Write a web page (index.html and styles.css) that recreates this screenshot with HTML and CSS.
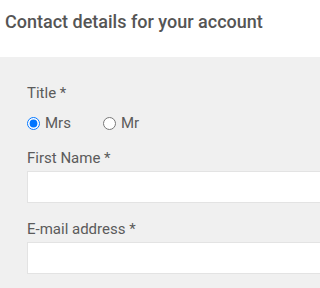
FILE: index.html
```html
<!DOCTYPE html>
<html lang="en">
<head>
<meta charset="utf-8">
<title>Contact details</title>
<link rel="stylesheet" href="styles.css">
</head>
<body>
  <header class="header">
    <h1 class="heading">Contact details for your account</h1>
  </header>
  <section class="panel">
    <div class="field">
      <div class="label">Title *</div>
      <div class="radios">
        <label class="radio"><input type="radio" name="title" checked><span>Mrs</span></label>
        <label class="radio"><input type="radio" name="title"><span>Mr</span></label>
      </div>
    </div>
    <div class="field">
      <label class="label" for="fn">First Name *</label>
      <input class="text-input" id="fn" type="text">
    </div>
    <div class="field">
      <label class="label" for="em">E-mail address *</label>
      <input class="text-input" id="em" type="email">
    </div>
  </section>
</body>
</html>
```
FILE: styles.css
```css
html, body {
  margin: 0;
  padding: 0;
  height: 100%;
  overflow: hidden;
}
body {
  font-family: Roboto, "Liberation Sans", sans-serif;
  color: #5b5b5b;
  background: #f0f0f0;
}
.header {
  background: #ffffff;
  height: 57px;
  box-sizing: border-box;
  padding: 11px 5px 0;
}
.heading {
  margin: 0;
  font-size: 18px;
  line-height: 21px;
  font-weight: 500;
  color: #555555;
  white-space: nowrap;
}
.panel {
  background: #f0f0f0;
  padding: 27px 0 14px 27px;
  display: flex;
  flex-direction: column;
  gap: 17px;
  overflow: hidden;
}
.field {
  display: flex;
  flex-direction: column;
  gap: 4px;
}
.label {
  display: block;
  font-size: 15px;
  line-height: 18px;
  color: #5b5b5b;
}
.radios {
  display: flex;
  gap: 32px;
  margin-top: 8px;
}
.radio {
  display: flex;
  align-items: center;
  gap: 5px;
  font-size: 15px;
  line-height: 18px;
}
.radio input {
  width: 13px;
  height: 13px;
  margin: 0;
}
.text-input {
  display: block;
  flex: none;
  width: calc(100% + 20px);
  height: 32px;
  box-sizing: border-box;
  margin: 0;
  border: 1px solid #e3e3e3;
  border-radius: 0;
  background: #ffffff;
  padding: 0 8px;
  font: inherit;
  outline: none;
}
```
